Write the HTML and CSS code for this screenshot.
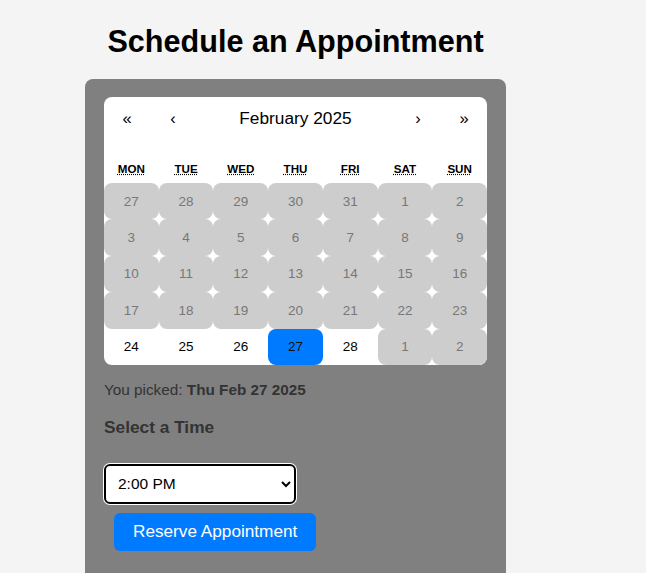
FILE: index.html
```html
<!DOCTYPE html>
<html lang="en">

<head>
    <meta charset="UTF-8">
    <meta name="viewport" content="width=device-width, initial-scale=1.0">
    <title>Schedule an Appointment</title>
    <link rel="stylesheet" href="styles.css">
</head>

<body>
    <div class="app">
        <h1>Schedule an Appointment</h1>
        <div class="booking-card">
            <div class="calendar">
                <div class="calendar-nav">
                    <button class="nav-arrow">«</button>
                    <button class="nav-arrow">‹</button>
                    <button class="nav-label">February 2025</button>
                    <button class="nav-arrow">›</button>
                    <button class="nav-arrow">»</button>
                </div>
                <div class="weekdays">
                    <div><abbr title="Monday">Mon</abbr></div>
                    <div><abbr title="Tuesday">Tue</abbr></div>
                    <div><abbr title="Wednesday">Wed</abbr></div>
                    <div><abbr title="Thursday">Thu</abbr></div>
                    <div><abbr title="Friday">Fri</abbr></div>
                    <div><abbr title="Saturday">Sat</abbr></div>
                    <div><abbr title="Sunday">Sun</abbr></div>
                </div>
                <div class="days">
                    <button class="tile disabled">27</button>
                    <button class="tile disabled">28</button>
                    <button class="tile disabled">29</button>
                    <button class="tile disabled">30</button>
                    <button class="tile disabled">31</button>
                    <button class="tile disabled">1</button>
                    <button class="tile disabled">2</button>
                    <button class="tile disabled">3</button>
                    <button class="tile disabled">4</button>
                    <button class="tile disabled">5</button>
                    <button class="tile disabled">6</button>
                    <button class="tile disabled">7</button>
                    <button class="tile disabled">8</button>
                    <button class="tile disabled">9</button>
                    <button class="tile disabled">10</button>
                    <button class="tile disabled">11</button>
                    <button class="tile disabled">12</button>
                    <button class="tile disabled">13</button>
                    <button class="tile disabled">14</button>
                    <button class="tile disabled">15</button>
                    <button class="tile disabled">16</button>
                    <button class="tile disabled">17</button>
                    <button class="tile disabled">18</button>
                    <button class="tile disabled">19</button>
                    <button class="tile disabled">20</button>
                    <button class="tile disabled">21</button>
                    <button class="tile disabled">22</button>
                    <button class="tile disabled">23</button>
                    <button class="tile">24</button>
                    <button class="tile">25</button>
                    <button class="tile">26</button>
                    <button class="tile active">27</button>
                    <button class="tile">28</button>
                    <button class="tile disabled">1</button>
                    <button class="tile disabled">2</button>
                </div>
            </div>

            <p class="picked">You picked: <strong>Thu Feb 27 2025</strong></p>

            <h3>Select a Time</h3>
            <select class="time-select">
                <option>2:00 PM</option>
                <option>3:00 PM</option>
                <option>4:00 PM</option>
            </select>
            <button class="boton">Reserve Appointment</button>
        </div>
    </div>
</body>

</html>
```

FILE: styles.css
```css
body {
    font-family: "Liberation Sans", Arial, sans-serif;
    margin: 0;
    padding: 0;
    background-color: #f4f4f4;
    overflow: hidden;
}

.app {
    width: 421px;
    margin-left: 85px;
}

h1 {
    text-align: center;
    font-size: 30.6px;
    margin: 24px 0 20px;
    color: #000;
}

.booking-card {
    background-color: #808080;
    border-radius: 8px;
    padding: 18px 19px 30px;
    min-height: 500px;
}

.calendar {
    background-color: #fff;
    border-radius: 8px;
    overflow: hidden;
}

.calendar button {
    font-family: inherit;
    border: none;
    background: none;
    margin: 0;
    padding: 0;
    color: #000;
}

.calendar-nav {
    display: flex;
    height: 43px;
    margin-bottom: 17px;
}

.nav-arrow {
    width: 46px;
    font-size: 16.5px;
}

.nav-label {
    flex: 1;
    font-size: 17.3px;
}

.weekdays {
    display: grid;
    grid-template-columns: repeat(7, 1fr);
    text-align: center;
    font-size: 11.6px;
    font-weight: bold;
    text-transform: uppercase;
    padding: 5px 0 8px;
}

.weekdays abbr {
    text-decoration: underline dotted;
}

.days {
    display: grid;
    grid-template-columns: repeat(7, 1fr);
    grid-auto-rows: 36.4px;
}

.tile {
    font-size: 13.5px;
    border-radius: 8px;
}

.tile.disabled {
    background-color: #cdcdcd;
    color: #777;
}

.tile.active {
    background-color: #007bff;
    color: #111;
}

.picked {
    color: #333;
    font-size: 15.3px;
    margin: 16px 0 18px;
}

h3 {
    color: #333;
    font-size: 17.3px;
    margin: 0 0 26px;
}

.time-select {
    display: block;
    width: 192px;
    height: 40px;
    padding: 0 8px;
    font-family: inherit;
    font-size: 15.5px;
    color: #000;
    background-color: #fff;
    border: 2px solid #000;
    border-radius: 6px;
    box-shadow: 0 0 0 1px #fff;
}

.boton {
    display: block;
    margin: 9px 10px 0;
    padding: 0 19px;
    height: 38px;
    background-color: #007bff;
    color: #fff;
    font-family: inherit;
    font-size: 17.2px;
    border: none;
    border-radius: 6px;
    cursor: pointer;
}
```
